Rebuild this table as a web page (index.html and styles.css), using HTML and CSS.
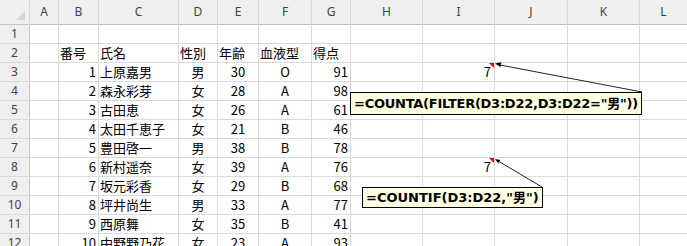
FILE: index.html
```html
<!DOCTYPE html>
<html lang="ja">
<head>
  <meta charset="UTF-8" />
  <title>性別カウント</title>
  <link rel="stylesheet" href="styles.css">
</head>
<body>
  <div class="sheet">
    <div class="hd corner"></div>
    <div class="hd">A</div><div class="hd">B</div><div class="hd">C</div><div class="hd">D</div>
    <div class="hd">E</div><div class="hd">F</div><div class="hd">G</div><div class="hd">H</div>
    <div class="hd">I</div><div class="hd">J</div><div class="hd">K</div><div class="hd">L</div>

    <div class="rh">1</div>
    <div></div><div></div><div></div><div></div><div></div><div></div>
    <div></div><div></div><div></div><div></div><div></div><div></div>

    <div class="rh">2</div>
    <div></div><div>番号</div><div>氏名</div><div>性別</div><div>年齢</div><div>血液型</div>
    <div>得点</div><div></div><div></div><div></div><div></div><div></div>

    <div class="rh">3</div>
    <div></div><div class="r">1</div><div>上原嘉男</div><div class="c">男</div><div class="c">30</div><div class="c">O</div>
    <div class="r">91</div><div></div><div class="r noted">7</div><div></div><div></div><div></div>

    <div class="rh">4</div>
    <div></div><div class="r">2</div><div>森永彩芽</div><div class="c">女</div><div class="c">28</div><div class="c">A</div>
    <div class="r">98</div><div></div><div></div><div></div><div></div><div></div>

    <div class="rh">5</div>
    <div></div><div class="r">3</div><div>古田恵</div><div class="c">女</div><div class="c">26</div><div class="c">A</div>
    <div class="r">61</div><div></div><div></div><div></div><div></div><div></div>

    <div class="rh">6</div>
    <div></div><div class="r">4</div><div>太田千恵子</div><div class="c">女</div><div class="c">21</div><div class="c">B</div>
    <div class="r">46</div><div></div><div></div><div></div><div></div><div></div>

    <div class="rh">7</div>
    <div></div><div class="r">5</div><div>豊田啓一</div><div class="c">男</div><div class="c">38</div><div class="c">B</div>
    <div class="r">78</div><div></div><div></div><div></div><div></div><div></div>

    <div class="rh">8</div>
    <div></div><div class="r">6</div><div>新村遥奈</div><div class="c">女</div><div class="c">39</div><div class="c">A</div>
    <div class="r">76</div><div></div><div class="r noted">7</div><div></div><div></div><div></div>

    <div class="rh">9</div>
    <div></div><div class="r">7</div><div>坂元彩香</div><div class="c">女</div><div class="c">29</div><div class="c">B</div>
    <div class="r">68</div><div></div><div></div><div></div><div></div><div></div>

    <div class="rh">10</div>
    <div></div><div class="r">8</div><div>坪井尚生</div><div class="c">男</div><div class="c">33</div><div class="c">A</div>
    <div class="r">77</div><div></div><div></div><div></div><div></div><div></div>

    <div class="rh">11</div>
    <div></div><div class="r">9</div><div>西原舞</div><div class="c">女</div><div class="c">35</div><div class="c">B</div>
    <div class="r">41</div><div></div><div></div><div></div><div></div><div></div>

    <div class="rh">12</div>
    <div></div><div class="r">10</div><div>中野野乃花</div><div class="c">女</div><div class="c">23</div><div class="c">A</div>
    <div class="r">93</div><div></div><div></div><div></div><div></div><div></div>
  </div>

  <!-- comment callouts for the two formulas in column I -->
  <svg class="arrows" width="687" height="246" viewBox="0 0 687 246">
    <line x1="500" y1="65" x2="642" y2="92" />
    <polygon points="495,63.5 501.4,62.3 500.4,67" />
    <line x1="499" y1="161.5" x2="542" y2="187" />
    <polygon points="495,159 500.3,159.9 498.3,163.3" />
  </svg>
  <div class="note note-filter">=COUNTA(FILTER(D3:D22,D3:D22="男"))</div>
  <div class="note note-countif">=COUNTIF(D3:D22,"男")</div>
</body>
</html>
```

FILE: styles.css
```css
body {
  margin: 0;
  width: 687px;
  height: 246px;
  overflow: hidden;
  background: #fff;
  position: relative;
}
.sheet {
  display: grid;
  grid-template-columns: 29px 28px 39px 79px 38px 40px 52px 38px 71px 71px 72px 71px 1fr;
  grid-template-rows: 24px repeat(12, 18px);
  gap: 1px;
  background: #dadada;
  width: 687px;
  font-family: "Noto Sans CJK JP", sans-serif;
  font-size: 13px;
  color: #000;
}
.sheet > div {
  background: #fff;
  line-height: 18px;
  padding: 0 1px;
  white-space: nowrap;
  position: relative;
}
.sheet .hd,
.sheet .rh {
  background: #efefef;
  color: #444;
  font-family: "Noto Sans", sans-serif;
  text-align: center;
}
.sheet .hd {
  font-size: 12px;
  line-height: 24px;
  box-shadow: 0 1px 0 #c4c4c4;
}
.sheet .rh {
  font-size: 12px;
  box-shadow: 1px 0 0 #c4c4c4;
}
.sheet .corner::after {
  content: "";
  position: absolute;
  right: 4px;
  bottom: 4px;
  border-left: 9px solid transparent;
  border-bottom: 9px solid #d6d6d6;
}
.sheet .r {
  text-align: right;
  padding-right: 2px;
}
.sheet .c {
  text-align: center;
}
.sheet .noted {
  padding-right: 3px;
}
.sheet .noted::after {
  content: "";
  position: absolute;
  top: 0;
  right: 0;
  border-left: 5px solid transparent;
  border-top: 5px solid #e00000;
}

.arrows {
  position: absolute;
  left: 0;
  top: 0;
}
.arrows line {
  stroke: #222;
  stroke-width: 1;
}
.arrows polygon {
  fill: #000;
}

.note {
  position: absolute;
  box-sizing: border-box;
  background: #ffffe1;
  border: 1px solid #000;
  font-family: "DejaVu Sans", "Noto Sans CJK JP", sans-serif;
  font-weight: bold;
  font-size: 13px;
  white-space: nowrap;
  padding-left: 3px;
}
.note-filter {
  left: 350px;
  top: 92px;
  width: 292px;
  height: 23px;
  line-height: 21px;
  letter-spacing: -0.25px;
}
.note-countif {
  left: 362px;
  top: 187px;
  width: 181px;
  height: 21px;
  line-height: 19px;
}
```
